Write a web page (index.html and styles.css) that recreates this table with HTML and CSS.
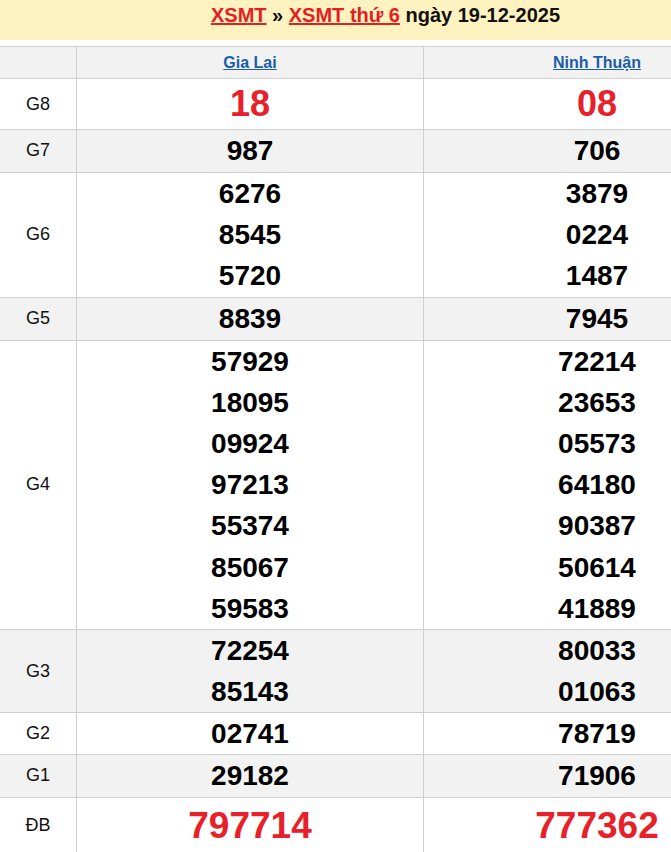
FILE: index.html
```html
<!DOCTYPE html>
<html lang="vi">
<head>
<meta charset="utf-8">
<title>XSMT thứ 6 ngày 19-12-2025</title>
<link rel="stylesheet" href="styles.css">
</head>
<body>
<div class="page">
  <div class="wrap">
    <h2 class="title"><a href="#">XSMT</a> » <a href="#">XSMT thứ 6</a> ngày 19-12-2025</h2>
    <table class="kq">
      <tr class="head">
        <th class="lbl"></th>
        <th><a href="#">Gia Lai</a></th>
        <th><a href="#">Ninh Thuận</a></th>
      </tr>
      <tr class="g8">
        <td class="lbl">G8</td>
        <td><div class="n">18</div></td>
        <td><div class="n">08</div></td>
      </tr>
      <tr class="alt one">
        <td class="lbl">G7</td>
        <td><div class="n">987</div></td>
        <td><div class="n">706</div></td>
      </tr>
      <tr>
        <td class="lbl">G6</td>
        <td><div class="n">6276</div><div class="n">8545</div><div class="n">5720</div></td>
        <td><div class="n">3879</div><div class="n">0224</div><div class="n">1487</div></td>
      </tr>
      <tr class="alt one">
        <td class="lbl">G5</td>
        <td><div class="n">8839</div></td>
        <td><div class="n">7945</div></td>
      </tr>
      <tr>
        <td class="lbl">G4</td>
        <td><div class="n">57929</div><div class="n">18095</div><div class="n">09924</div><div class="n">97213</div><div class="n">55374</div><div class="n">85067</div><div class="n">59583</div></td>
        <td><div class="n">72214</div><div class="n">23653</div><div class="n">05573</div><div class="n">64180</div><div class="n">90387</div><div class="n">50614</div><div class="n">41889</div></td>
      </tr>
      <tr class="alt">
        <td class="lbl">G3</td>
        <td><div class="n">72254</div><div class="n">85143</div></td>
        <td><div class="n">80033</div><div class="n">01063</div></td>
      </tr>
      <tr>
        <td class="lbl">G2</td>
        <td><div class="n">02741</div></td>
        <td><div class="n">78719</div></td>
      </tr>
      <tr class="alt">
        <td class="lbl">G1</td>
        <td><div class="n">29182</div></td>
        <td><div class="n">71906</div></td>
      </tr>
      <tr class="db">
        <td class="lbl">ĐB</td>
        <td><div class="n">797714</div></td>
        <td><div class="n">777362</div></td>
      </tr>
    </table>
  </div>
</div>
</body>
</html>
```
FILE: styles.css
```css
html, body {
  margin: 0;
  padding: 0;
  overflow: hidden;
  background: #fff;
}
body {
  font-family: "Liberation Sans", Arial, sans-serif;
  color: #000;
}
.page {
  width: 671px;
  height: 852px;
  overflow: hidden;
}
.wrap {
  width: 771px;
}
.title {
  margin: 0 0 6px;
  height: 40px;
  line-height: 31px;
  background: #fef2c0;
  text-align: center;
  font-size: 20px;
  font-weight: bold;
  color: #111;
}
.title a {
  color: #e3201f;
  text-decoration: underline;
}
.kq {
  width: 771px;
  border-collapse: collapse;
  table-layout: fixed;
}
.kq th, .kq td {
  border: 1px solid #cfcfcf;
  padding: 0;
  text-align: center;
  vertical-align: middle;
}
.kq tr > :first-child {
  border-left: none;
}
.kq .lbl {
  width: 76px;
  font-size: 18px;
  font-weight: normal;
  color: #111;
}
.kq tr.head th {
  height: 31px;
  background: #f2f2f2;
  font-size: 16px;
  font-weight: bold;
}
.kq tr.head th a {
  color: #1b5ea8;
  text-decoration: underline;
}
.kq tr.alt td {
  background: #f2f2f2;
}
.kq tr.one td {
  padding-bottom: 1px;
}
.n {
  font-size: 28px;
  font-weight: bold;
  line-height: 41.15px;
}
.g8 .n, .db .n {
  color: #e8202a;
  font-size: 36px;
  line-height: 50px;
}
.db .n {
  font-size: 37px;
  line-height: 56px;
}
```
